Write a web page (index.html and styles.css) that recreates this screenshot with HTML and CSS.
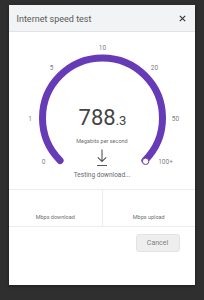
FILE: index.html
```html
<!DOCTYPE html>
<html>
<head>
<meta charset="utf-8">
<link rel="stylesheet" href="styles.css">
</head>
<body>
<div class="dialog">
  <div class="header">
    <span class="title">Internet speed test</span>
    <svg class="close" width="7" height="7" viewBox="0 0 7 7"><path d="M0.8 0.8L6.2 6.2M6.2 0.8L0.8 6.2" stroke="#3a3a3a" stroke-width="1.2"/></svg>
  </div>
  <div class="gauge">
    <svg class="dial" width="186" height="157" viewBox="0 0 186 157">
      <path d="M51.07 128.43 A60 60 0 1 1 135.93 128.43" fill="none" stroke="#673ab7" stroke-width="7" stroke-linecap="round"/>
      <circle cx="136.6" cy="129.3" r="3.2" fill="#fff" stroke="#673ab7" stroke-width="1"/>
      <g class="ticks">
        <text x="34.5" y="130">0</text>
        <text x="21" y="87">1</text>
        <text x="42.5" y="36">5</text>
        <text x="93.5" y="15.5">10</text>
        <text x="145.5" y="36">20</text>
        <text x="166.5" y="87">50</text>
        <text x="156.5" y="130">100+</text>
      </g>
    </svg>
    <div class="readout">
      <div class="value">788<span class="decimal">.3</span></div>
      <div class="unit">Megabits per second</div>
      <svg class="dl-icon" width="12" height="18" viewBox="0 0 12 18"><path d="M6 0.5V12.5M1.8 8.3L6 12.5L10.2 8.3M1 16.5H11" fill="none" stroke="#555" stroke-width="1.1"/></svg>
      <div class="status">Testing download...</div>
    </div>
  </div>
  <div class="stats">
    <div class="stat">Mbps download</div>
    <div class="stat">Mbps upload</div>
  </div>
  <div class="footer">
    <button class="cancel">Cancel</button>
  </div>
</div>
</body>
</html>
```
FILE: styles.css
```css
html, body {
  margin: 0;
  padding: 0;
  background: #2f2f2f;
}
body {
  font-family: Roboto, "Liberation Sans", sans-serif;
  padding: 5px 0 0 9px;
  height: 300px;
  box-sizing: border-box;
}
.dialog {
  width: 186px;
  height: 280px;
  background: #fff;
  display: flex;
  flex-direction: column;
  box-shadow: 0 1px 3px rgba(0,0,0,0.4);
}
.header {
  height: 26px;
  background: #f1f3f4;
  border-bottom: 1px solid #e2e3e4;
  display: flex;
  align-items: center;
  justify-content: space-between;
  padding: 0 9.5px 0 7.5px;
}
.title {
  font-size: 9px;
  color: #5a5a5a;
  padding-top: 2px;
}
.close {
  display: block;
}
.gauge {
  position: relative;
  height: 157px;
  border-bottom: 1px solid #ececec;
}
.dial {
  position: absolute;
  left: 0;
  top: 0;
}
.ticks text {
  font-family: Roboto, "Liberation Sans", sans-serif;
  font-size: 6.5px;
  fill: #808080;
  text-anchor: middle;
  dominant-baseline: central;
}
.readout {
  position: relative;
  padding-top: 75px;
  display: flex;
  flex-direction: column;
  align-items: center;
}
.value {
  font-size: 22px;
  line-height: 22px;
  color: #444;
  padding-left: 1px;
}
.decimal {
  font-size: 13px;
  line-height: 1;
}
.unit {
  margin-top: 7.5px;
  font-size: 5.5px;
  line-height: 8px;
  color: #707070;
}
.dl-icon {
  display: block;
  margin-top: 4px;
}
.status {
  margin-top: 4.5px;
  font-size: 6.5px;
  line-height: 9px;
  color: #66696d;
}
.stats {
  height: 36px;
  display: flex;
  border-bottom: 1px solid #ececec;
}
.stat {
  flex: 1;
  display: flex;
  align-items: flex-end;
  justify-content: center;
  padding-bottom: 5px;
  font-size: 5.5px;
  line-height: 8px;
  color: #707070;
}
.stat + .stat {
  border-left: 1px solid #ececec;
}
.footer {
  display: flex;
  justify-content: flex-end;
  padding: 7px 15.5px 0 0;
}
.cancel {
  width: 44px;
  height: 18px;
  background: #eeeeee;
  border: 1px solid #e3e3e3;
  border-radius: 3px;
  font-family: Roboto, "Liberation Sans", sans-serif;
  font-size: 7px;
  color: #808080;
  padding: 0;
}
```
